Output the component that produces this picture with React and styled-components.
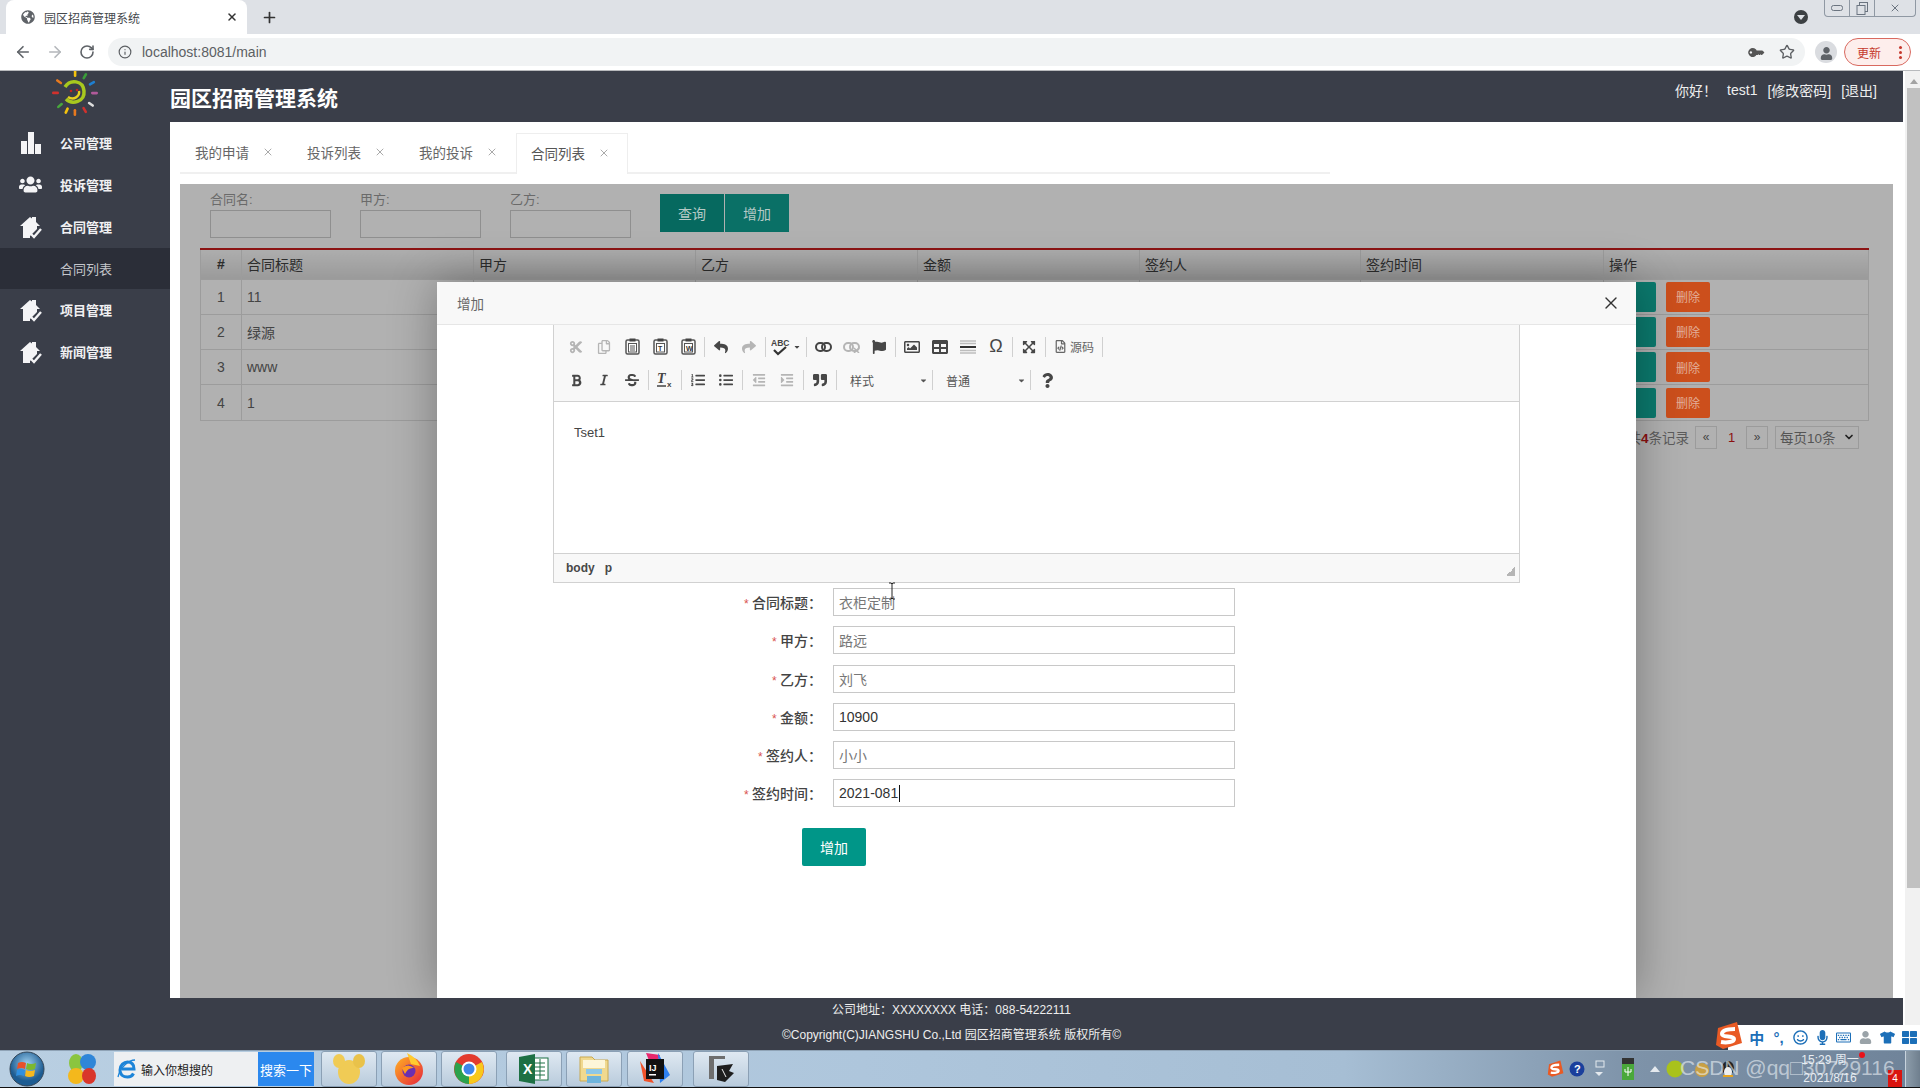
import React from "react";
import styled, { createGlobalStyle } from "styled-components";
import { ArrowLeft, ArrowRight, RotateCw, Info, Star, X, Plus, ChevronDown } from "lucide-react";
import {
  FaCut, FaRegCopy, FaReply, FaShare, FaFlag, FaRegImage, FaTable,
  FaExpandArrowsAlt, FaBold, FaItalic, FaStrikethrough, FaListOl, FaListUl, FaOutdent, FaIndent,
  FaQuoteRight, FaQuestion, FaGlobeAmericas, FaKey, FaUser, FaUsers, FaTshirt, FaMicrophone,
  FaRegSmile, FaRegKeyboard, FaThLarge, FaCaretDown, FaRegFileCode,
} from "react-icons/fa";

const SANS = `"Liberation Sans", "Noto Sans CJK SC", sans-serif`;

const Global = createGlobalStyle`
  html, body { margin: 0; padding: 0; height: 100%; overflow: hidden; background: #fff; }
  body { font-family: ${SANS}; font-size: 13px; color: #333; }
  * { box-sizing: border-box; }
`;

const Win = styled.div`
  width: 1920px; height: 1088px; display: flex; flex-direction: column; overflow: hidden; position: relative;
`;

/* browser chrome */
const TabStrip = styled.div`
  height: 34px; background: #dee1e6; display: flex; align-items: flex-end; padding-left: 6px; position: relative; flex: none;
`;
const BrowserTab = styled.div`
  width: 241px; height: 34px; background: #fff; border-radius: 8px 8px 0 0; display: flex; align-items: center;
  padding: 0 9px 0 15px; gap: 9px; font-size: 12px; color: #45484d;
`;
const TabTitle = styled.span` flex: 1; `;
const NewTab = styled.div` width: 40px; height: 34px; margin-left: 2px; display: flex; align-items: center; justify-content: center; color: #333; `;
const StripRight = styled.div`
  margin-left: auto; align-self: flex-start; display: flex; align-items: flex-start; gap: 16px; padding-right: 4px;
`;
const ProfileDot = styled.div`
  width: 14px; height: 14px; margin-top: 10px; border-radius: 50%; background: #3c4043; display: flex; align-items: center; justify-content: center;
  &::after { content: ""; border: 4px solid transparent; border-top: 5px solid #dee1e6; margin-top: 5px; }
`;
const WinButtons = styled.div`
  width: 92px; height: 17px; border: 1px solid #8f98a3; border-top: 0; border-radius: 0 0 4px 4px; display: grid; grid-template-columns: 25px 25px 1fr;
`;
const WinBtn = styled.div`
  display: flex; align-items: center; justify-content: center; color: #6b7480; border-right: 1px solid #8f98a3;
  &:last-child { border-right: 0; }
`;
const BrowserBar = styled.div`
  height: 37px; background: #fff; display: flex; align-items: center; padding-left: 7px; flex: none; border-bottom: 1px solid #b8babd;
`;
const NavIcon = styled.div` width: 32px; display: flex; justify-content: center; color: ${p => p.$off ? "#b4b7bb" : "#5f6368"}; `;
const Address = styled.div`
  margin-left: 5px; width: 1697px; height: 28px; border-radius: 14px; background: #f1f3f4; display: flex; align-items: center;
  padding: 0 10px 0 10px; gap: 10px; font-size: 14px; color: #5c5f63;
`;
const AddressText = styled.span` flex: 1; `;
const KeyIcon = styled(FaKey)` transform: scaleX(-1) rotate(45deg); margin-right: 7px; color: #555; `;
const AvatarCircle = styled.div`
  margin-left: 10px; width: 22px; height: 22px; border-radius: 50%; background: #dadce0; color: #5f6368; display: flex; align-items: flex-end; justify-content: center; padding-bottom: 3px;
`;
const UpdatePill = styled.div`
  margin-left: 7px; width: 67px; height: 28px; border: 1px solid #d9695f; border-radius: 14px; background: #fdeeec; color: #c5392d; font-size: 12px;
  display: flex; align-items: center; justify-content: space-between; padding: 0 8px 0 12px;
`;
const Dots = styled.span`
  width: 3px; height: 3px; border-radius: 50%; background: #c5392d; box-shadow: 0 -5px 0 #c5392d, 0 5px 0 #c5392d;
`;

/* page */
const Viewport = styled.div` flex: 1; display: flex; min-height: 0; `;
const Page = styled.div` flex: 1; display: flex; flex-direction: column; min-width: 0; `;
const Body = styled.div` flex: 1; display: flex; min-height: 0; `;
const Sidebar = styled.aside` width: 170px; background: #3a3e49; flex: none; display: flex; flex-direction: column; `;
const LogoBox = styled.div` height: 51px; padding-left: 50px; flex: none; `;
const NavItem = styled.div`
  height: 42px; display: flex; align-items: center; padding: 0 0 1px 19px; gap: 18px; color: #f0f0f2; font-size: 13px; font-weight: 700;
`;
const NavIconBox = styled.div` width: 23px; display: flex; justify-content: center; color: #f4f4f6; `;
const SubItem = styled.div`
  height: 41px; background: #2b2e38; display: flex; align-items: center; padding-left: 60px; color: #c4c6cb; font-size: 13px;
`;
const MainCol = styled.div` flex: 1; display: flex; flex-direction: column; min-width: 0; `;
const Header = styled.header`
  height: 51px; background: #3a3e49; flex: none; display: flex; justify-content: space-between; padding-right: 26px; color: #fff;
`;
const Title = styled.h1` margin: 14px 0 0; font-size: 21px; line-height: 27px; font-weight: 700; `;
const UserBar = styled.div` display: flex; align-items: center; height: 38px; gap: 10px; font-size: 14px; color: #eee; `;
const Content = styled.div` flex: 1; background: #fff; display: flex; flex-direction: column; padding: 11px 10px 0; min-height: 0; `;
const Tabs = styled.div` height: 41px; width: 1150px; border-bottom: 2px solid #f0f0f0; display: flex; flex: none; `;
const TabItem = styled.div`
  width: 112px; height: ${p => p.$active ? 41 : 39}px; padding: 0 0 2px 14px; display: flex; align-items: center; gap: 13px; font-size: 13.5px;
  color: ${p => p.$active ? "#555" : "#666"}; background: #fff;
  border: ${p => p.$active ? "1px solid #eee" : "1px solid transparent"}; border-bottom: 0;
`;
const TabClose = styled.span` color: #aaa; display: flex; `;

const Panel = styled.div`
  margin-top: 10px; flex: 1; background: #b1b1b1; position: relative; overflow: hidden; min-height: 0;
`;
const SearchRow = styled.div` display: flex; padding: 8px 0 0 30px; height: 64px; `;
const SearchField = styled.label`
  width: 121px; margin-right: 29px; display: flex; flex-direction: column; font-size: 13px; color: #6a6a6a; line-height: 16px;
`;
const SearchBox = styled.div` height: 28px; margin-top: 2px; border: 1px solid #8f8f8f; background: #b1b1b1; `;
const SearchBtn = styled.div`
  width: 64px; height: 38px; margin-top: 2px; margin-right: 1px; background: ${p => p.$dark ? "#06695f" : "#0a7066"}; color: #b5c9c6;
  display: flex; align-items: center; justify-content: center; font-size: 14px;
`;
const Table = styled.table`
  margin: 0 25px 0 20px; width: 1668px; border-collapse: collapse; table-layout: fixed; border-top: 2px solid #8c1414; font-size: 14px; color: #333;
  th, td { border: 1px solid #9c9c9c; padding: 0 5px; text-align: left; }
  th { height: 30px; font-weight: 400; background: linear-gradient(#adadad, #9a9a9a); color: #2c2c2c; }
  td { height: 35.3px; background: #b1b1b1; color: #444; }
`;
const Col = styled.col` width: ${p => p.$w}px; `;
const NumCell = styled.td` && { text-align: center; } `;
const NumHead = styled.th` && { text-align: center; font-weight: 700; } `;
const OpButtons = styled.div` display: flex; gap: 10px; margin-left: -25px; `;
const OpBtn = styled.div`
  width: ${p => p.$w}px; height: 30px; border-radius: 2px; background: ${p => p.$c}; color: ${p => p.$t};
  display: flex; align-items: center; justify-content: center; font-size: 12px;
`;
const Pager = styled.div`
  display: flex; justify-content: flex-end; align-items: center; height: 23px; margin: 5px 34px 0 0; font-size: 13.5px; color: #5c5c5c; gap: 0;
`;
const Total = styled.span` margin-right: 6px; b { color: #8b1010; } `;
const PageBox = styled.div`
  width: 22px; height: 23px; border: 1px solid #9b9b9b; display: flex; align-items: center; justify-content: center; font-size: 12px; color: #444;
`;
const PageNum = styled.span` width: 29px; text-align: center; color: #8b1010; font-size: 13px; `;
const PageSelect = styled.div`
  margin-left: 7px; width: 84px; height: 23px; border: 1px solid #9b9b9b; display: flex; align-items: center; justify-content: space-between; padding: 0 3px 0 4px; color: #555; font-size: 13.5px;
`;

/* modal over the dimmed panel */
const Modal = styled.div`
  position: absolute; left: 257px; top: 98px; width: 1199px; height: 716px; background: #fff;
  box-shadow: 0 0 45px rgba(0,0,0,.32); display: flex; flex-direction: column;
`;
const ModalHead = styled.div`
  height: 43px; flex: none; background: #f8f8f8; border-bottom: 1px solid #e6e6e6; display: flex; align-items: center; justify-content: space-between;
  padding: 0 15px 0 20px; font-size: 13.5px; color: #666;
`;
const CloseX = styled.div` color: #333; display: flex; `;
const Editor = styled.div`
  margin-left: 116px; width: 967px; height: 258px; flex: none; border: 1px solid #d1d1d1; border-top: 0; display: flex; flex-direction: column;
`;
const EdToolbar = styled.div`
  height: 77px; flex: none; background: #f8f8f8; border-bottom: 1px solid #d1d1d1; padding: 5px 0 0 8px; display: flex; flex-direction: column; gap: 0;
`;
const EdRow = styled.div` height: 33.5px; display: flex; align-items: center; `;
const Tool = styled.div`
  width: ${p => p.$w || 28}px; height: 24px; display: flex; align-items: center; justify-content: center; font-size: ${p => p.$fs || 14}px; color: ${p => p.$off ? "#b5b5b5" : "#474747"}; flex: none;
`;
const Sep = styled.div` width: 1px; height: 20px; background: #d0d0d0; margin: 0 2px; flex: none; `;
const SourceBtn = styled.div`
  width: 52px; height: 24px; display: flex; align-items: center; justify-content: center; gap: 3px; color: #666; font-size: 12px; flex: none;
`;
const Combo = styled.div`
  width: ${p => p.$w}px; height: 24px; padding: 0 2px 0 11px; display: flex; align-items: center; justify-content: space-between; color: #555; font-size: 12px; flex: none;
`;
const EdBody = styled.div` flex: 1; background: #fff; padding: 23px 20px; font-size: 13px; line-height: 16px; color: #444; `;
const EdStatus = styled.div`
  height: 29px; background: #f8f8f8; border-top: 1px solid #d1d1d1; display: flex; align-items: center; justify-content: space-between; padding: 0 4px 0 12px; font-size: 12px; font-weight: 700; color: #484848;
`;
const Crumbs = styled.div` display: flex; gap: 10px; `;
const Grip = styled.div`
  width: 9px; height: 9px; align-self: flex-end; margin-bottom: 6px;
  background: linear-gradient(135deg, transparent 50%, #b5b5b5 50%);
`;
const Form = styled.div` padding-top: 5px; display: flex; flex-direction: column; gap: 10.3px; position: relative; `;
const Row = styled.div` display: flex; align-items: center; height: 28px; `;
const RowLabel = styled.div`
  width: 385px; margin-right: 11px; text-align: right; font-size: 14px; color: #444; font-weight: 500;
  &::before { content: "* "; color: #d9534f; font-size: 12px; }
`;
const Field = styled.div`
  width: 402px; height: 28px; border: 1px solid #c8c8c8; display: flex; align-items: center; padding: 0 5px; font-size: 14px;
  color: ${p => p.$dim ? "#777" : "#333"}; background: #fff;
`;
const Caret = styled.span` width: 1px; height: 17px; background: #111; margin-left: 1px; `;
const Submit = styled.div`
  margin: 10px 0 0 365px; width: 64px; height: 38px; background: #009688; color: #fff; border-radius: 2px;
  display: flex; align-items: center; justify-content: center; font-size: 14px;
`;
const IBeam = styled.svg` position: absolute; left: 451px; top: -1px; `;

const Footer = styled.footer`
  height: 52px; flex: none; background: #3a3e49; color: #eee; font-size: 12px; display: flex; flex-direction: column; align-items: center; padding-top: 3px; gap: 7px; line-height: 18px;
`;
const Scrollbar = styled.div`
  width: 17px; flex: none; background: #f1f1f1; padding: 4px 0 0 2px; display: flex; flex-direction: column; align-items: stretch;
  border-left: 2px solid #fff;
`;
const ScrollUp = styled.div`
  height: 13px; flex: none; display: flex; justify-content: center; align-items: center;
  &::after { content: ""; border: 4px solid transparent; border-bottom: 5px solid #a3a3a3; margin-top: -4px; }
`;
const ScrollThumb = styled.div` height: 800px; background: #c1c1c1; `;

/* windows taskbar */
const Taskbar = styled.div`
  height: 38px; flex: none; display: flex; align-items: center; position: relative; padding-left: 9px;
  background: linear-gradient(90deg, #b9cfe2 0%, #aec6dc 45%, #a6bed4 70%, #7e93a9 85%, #6f8399 100%);
  border-top: 1px solid #8fa3b6; border-bottom: 1px solid #111;
`;
const Orb = styled.svg` flex: none; `;
const Multi = styled.svg` margin-left: 20px; flex: none; `;
const Search360 = styled.div`
  margin-left: 15px; width: 200px; height: 34px; display: flex; background: #eef0f2; flex: none;
`;
const SearchHint = styled.div` flex: 1; display: flex; align-items: center; gap: 4px; padding-left: 3px; font-size: 12px; color: #222; `;
const SearchGo = styled.div` width: 56px; background: #2b88ee; color: #fff; font-size: 13px; display: flex; align-items: center; justify-content: center; white-space: nowrap; `;
const TaskGroup = styled.div` display: flex; gap: 4px; margin-left: ${p => p.$ml}px; flex: none; `;
const TaskBtn = styled.div`
  width: 56px; height: 36px; border: 1px solid #8ba0b5; border-radius: 3px; background: linear-gradient(#dfe9f2, #b9cbdc); display: flex; align-items: center; justify-content: center;
`;
const Tray = styled.div` position: absolute; right: 56px; top: 0; bottom: 0; display: flex; align-items: center; `;
const TrayIcon = styled.span` margin-left: ${p => p.$ml}px; display: flex; `;
const TrayClock = styled.div`
  width: 68px; color: #e8edf2; font-size: 12px; line-height: 18px; text-align: center; margin-left: 60px; white-space: nowrap;
`;
const ShowDesk = styled.div`
  position: absolute; right: 0; top: 0; bottom: 0; width: 15px; background: linear-gradient(90deg,#8c9caa,#6f7f8e); border-left: 1px solid #c8d3dd;
`;
const Badge = styled.div`
  position: absolute; right: 18px; bottom: 0; width: 14px; height: 17px; background: #d9140f; color: #fff; font-size: 10px; display: flex; align-items: center; justify-content: center;
`;
const RedDot = styled.div` position: absolute; left: 1859px; top: 1052px; width: 6px; height: 6px; border-radius: 50%; background: #e8111a; `;
const Watermark = styled.div`
  position: absolute; left: 1680px; top: 1054px; font-size: 21px; line-height: 28px; color: rgba(235,240,245,.62); white-space: nowrap; pointer-events: none;
`;
const ImeBar = styled.div`
  position: absolute; left: 1728px; top: 1025px; right: 0; height: 25px; background: #fff; display: flex; align-items: center; gap: 0; padding-left: 18px; color: #1c6fb8;
`;
const ImeCell = styled.div` width: 22.5px; display: flex; justify-content: center; font-size: 15px; font-weight: 700; color: ${p => p.$c || "#1c6fb8"}; `;
const SogouFloat = styled.div` position: absolute; left: 1713px; top: 1021px; `;

const Sogou = ({ s = 30 }) => (
  <svg width={s} height={s} viewBox="0 0 30 30">
    <path d="M5 7 L24 1 L29 22 L10 28 L3 24 Z" fill="#e95a24" />
    <path d="M22 8 C16 8 9 9 9 13 C9 17 21 14 21 18 C21 21 14 22 8 21" fill="none" stroke="#fff" strokeWidth="4" />
  </svg>
);

const Bars = () => (
  <svg width="20" height="22" viewBox="0 0 20 22">
    <rect x="0" y="9" width="6" height="13" fill="#f4f4f6" /><rect x="7" y="0" width="6" height="22" fill="#f4f4f6" /><rect x="14" y="12" width="6" height="10" fill="#f4f4f6" />
  </svg>
);

const HouseCheck = () => (
  <svg width="23" height="24" viewBox="0 0 23 24">
    <path d="M1 11 L11 2 L13 3.5 L13 2 L17 2 L17 7 L21 11 L18 11 L18 14 L11 21 L11 23 L4 23 L4 11 Z" fill="#f4f4f6" />
    <path d="M11 18 L15 22 L22 14" fill="none" stroke="#f4f4f6" strokeWidth="2.4" />
  </svg>
);

const rays = [
  [0, "#f4c20d"], [30, "#3a9d3a"], [60, "#1f7fd0"], [90, "#b05a9a"], [125, "#ddd"], [150, "#d0312d"],
  [180, "#e8791e"], [205, "#f4c20d"], [230, "#48a83c"], [270, "#d0312d"], [305, "#e8791e"],
];
const Logo = () => (
  <svg width="52" height="46" viewBox="0 0 52 46">
    {rays.map(([a, c]) => (
      <rect key={a} x="23.8" y="-1" width="2.6" height="7" rx="1.3" fill={c} transform={`rotate(${a} 25 22)`} />
    ))}
    <path d="M15 16 C20 8 33 9 34 20 C35 31 22 34 16 28" fill="none" stroke="#a8c81e" strokeWidth="3.5" />
    <path d="M18 26 C24 30 30 25 29 20" fill="none" stroke="#e8d21e" strokeWidth="2.4" />
    <circle cx="21" cy="20" r="1.3" fill="#c6231f" /><circle cx="27" cy="19" r="1.3" fill="#c6231f" />
  </svg>
);

const WinOrb = () => (
  <Orb width="36" height="36" viewBox="0 0 36 36">
    <defs><radialGradient id="o" cx=".5" cy=".35"><stop offset="0" stopColor="#9ed0f0" /><stop offset="1" stopColor="#1d5c92" /></radialGradient></defs>
    <circle cx="18" cy="18" r="17" fill="url(#o)" stroke="#345" />
    <path d="M9 12 Q13 10 17 12 L16 18 Q12 16 8 18Z" fill="#e8512a" />
    <path d="M18 12 Q22 14 27 12 L26 18 Q21 20 17 18Z" fill="#7cb82f" />
    <path d="M8 19 Q12 17 16 19 L15 25 Q11 23 7 25Z" fill="#2f8fe0" />
    <path d="M17 19 Q21 21 26 19 L25 25 Q20 27 16 25Z" fill="#f5b81f" />
  </Orb>
);
const Color360 = () => (
  <Multi width="34" height="34" viewBox="0 0 34 34">
    <ellipse cx="11" cy="11" rx="7" ry="9" fill="#8bc53f" /><ellipse cx="23" cy="10" rx="8" ry="8" fill="#2f86d8" />
    <ellipse cx="11" cy="24" rx="8" ry="8" fill="#f4b81c" /><ellipse cx="24" cy="24" rx="7" ry="8" fill="#d9362b" />
  </Multi>
);
const IEIcon = () => (
  <svg width="20" height="24" viewBox="0 0 20 24">
    <path d="M5 12h12c0-5-3-7-6.500-7S3 8 3 13s3.500 7 7.500 7c3 0 5-1.500 6-3.500" fill="none" stroke="#1c84d8" strokeWidth="3" />
    <path d="M1 20C3 10 12 3 18 3" fill="none" stroke="#1c84d8" strokeWidth="1.300" />
  </svg>
);
const FolderMouse = () => (
  <svg width="34" height="32" viewBox="0 0 34 32"><ellipse cx="17" cy="19" rx="11" ry="12" fill="#f0cb55" /><ellipse cx="7" cy="8" rx="6" ry="7" fill="#f0cb55" /><ellipse cx="27" cy="8" rx="6" ry="7" fill="#e9c24a" /></svg>
);
const Firefox = () => (
  <svg width="32" height="34" viewBox="0 0 32 34">
    <defs><linearGradient id="ff" x1="0" y1="0" x2="1" y2="1"><stop offset="0" stopColor="#ffb224" /><stop offset="1" stopColor="#e5243b" /></linearGradient></defs>
    <circle cx="16" cy="19" r="14" fill="url(#ff)" /><path d="M14 1 Q24 6 27 14 L18 12Z" fill="#ffcb30" /><circle cx="16" cy="19" r="6.5" fill="#6b2fb0" /><path d="M9 16 Q15 11 21 16 Q15 15 12 22Z" fill="#ff9a1f" />
  </svg>
);
const Chrome = () => (
  <svg width="32" height="32" viewBox="0 0 32 32">
    <circle cx="16" cy="16" r="15" fill="#e33b2e" /><path d="M16 16 L29 9 A15 15 0 0 1 16 31Z" fill="#f8c81c" /><path d="M16 16 L16 31 A15 15 0 0 1 3 9Z" fill="#2ba24c" />
    <circle cx="16" cy="16" r="7.5" fill="#fff" /><circle cx="16" cy="16" r="5.5" fill="#3f86e8" />
  </svg>
);
const Excel = () => (
  <svg width="32" height="30" viewBox="0 0 32 30">
    <rect x="14" y="4" width="16" height="22" fill="#fff" stroke="#1d7044" /><path d="M17 9h10M17 13h10M17 17h10M17 21h10M22 5v20" stroke="#1d7044" />
    <path d="M1 3 L17 0 V30 L1 27Z" fill="#1d7044" /><text x="5" y="20" fontSize="14" fontWeight="700" fontFamily="Liberation Sans, sans-serif" fill="#fff">X</text>
  </svg>
);
const Explorer = () => (
  <svg width="32" height="30" viewBox="0 0 32 30">
    <path d="M2 3h12l3 3h13v21H2Z" fill="#f0d98f" stroke="#c9a950" /><rect x="5" y="6" width="22" height="8" fill="#fdf6d8" /><rect x="8" y="15" width="16" height="5" fill="#8cc7e8" /><path d="M9 29v-7h14v7" fill="#6eb4dc" />
  </svg>
);
const Idea = () => (
  <svg width="30" height="32" viewBox="0 0 30 32">
    <path d="M6 0 L20 2 L14 20Z" fill="#e8266d" /><path d="M18 0 L30 22 L20 30Z" fill="#2d7ff0" /><path d="M0 8 L14 30 L4 28Z" fill="#f0522a" />
    <rect x="6" y="6" width="18" height="20" fill="#111" /><text x="9" y="18" fontSize="9" fontWeight="700" fontFamily="Liberation Sans, sans-serif" fill="#fff">IJ</text><rect x="9" y="21" width="7" height="1.5" fill="#fff" />
  </svg>
);
const Typora = () => (
  <svg width="32" height="32" viewBox="0 0 32 32">
    <path d="M4 3h16v3H9v20h-5Z" fill="#6e6e6e" /><path d="M12 13 L28 11 L24 18 L29 20 L20 29 L12 27Z" fill="#1e1e1e" /><path d="M17 16 L21 24" stroke="#eee" />
  </svg>
);

const rows = [["1", "11"], ["2", "绿源"], ["3", "www"], ["4", "1"]];
const cols = [41, 232, 222, 222, 222, 221, 243, 265];
const heads = ["合同标题", "甲方", "乙方", "金额", "签约人", "签约时间", "操作"];
const fields = [
  ["合同标题：", "衣柜定制", true], ["甲方：", "路远", true], ["乙方：", "刘飞", true],
  ["金额：", "10900", false], ["签约人：", "小小", true],
];

const Hr = () => (
  <svg width="18" height="16" viewBox="0 0 18 16"><path d="M1 2h16M1 4.500h16" stroke="#bdbdbd" strokeWidth="1.5" /><path d="M1 8h16" stroke="#333" strokeWidth="2" /><path d="M1 11.500h16M1 14h16" stroke="#bdbdbd" strokeWidth="1.5" /></svg>
);
const Spell = () => (
  <svg width="22" height="18" viewBox="0 0 22 18">
    <text x="0" y="8" fontSize="8.5" fontWeight="700" fontFamily="Liberation Sans, sans-serif" fill="#444">ABC</text>
    <path d="M3 12 L7 16 L15 9" fill="none" stroke="#333" strokeWidth="2.2" />
  </svg>
);
const PasteT = ({ t }) => (
  <svg width="15" height="17" viewBox="0 0 15 17">
    <rect x="1" y="2" width="13" height="14" rx="1.5" fill="none" stroke="#555" strokeWidth="1.5" />
    <rect x="4.5" y="0.5" width="6" height="3" fill="#444" />
    <rect x="3.5" y="5.5" width="8" height="8.5" fill="#fff" stroke="#555" />
    {t ? <text x="5" y="12.5" fontSize="7" fontWeight="700" fontFamily="Liberation Sans, sans-serif" fill="#333">{t}</text> : <path d="M5 8h5M5 10h5M5 12h5" stroke="#555" />}
  </svg>
);
const ChainLink = ({ off }) => (
  <svg width="17" height="12" viewBox="0 0 17 12">
    <rect x="1" y="2" width="9" height="8" rx="4" fill="none" stroke={off ? "#b5b5b5" : "#444"} strokeWidth="2" />
    <rect x="7" y="2" width="9" height="8" rx="4" fill="none" stroke={off ? "#b5b5b5" : "#444"} strokeWidth="2" />
    {off && <path d="M11 7l5 5M16 7l-5 5" stroke="#b5b5b5" strokeWidth="1.5" />}
  </svg>
);
const ClearFormat = () => (
  <svg width="18" height="18" viewBox="0 0 18 18">
    <text x="1" y="12" fontSize="14" fontWeight="700" fontStyle="italic" fontFamily="Liberation Serif, serif" fill="#444">T</text>
    <path d="M1 15h9" stroke="#444" strokeWidth="1.5" />
    <text x="11" y="16" fontSize="8" fontWeight="700" fontFamily="Liberation Sans, sans-serif" fill="#444">x</text>
  </svg>
);

export default function App() {
  return (
    <Win>
      <Global />
      <TabStrip>
        <BrowserTab>
          <FaGlobeAmericas size={14} color="#5f6368" />
          <TabTitle>园区招商管理系统</TabTitle>
          <X size={12} strokeWidth={3} color="#333" />
        </BrowserTab>
        <NewTab><Plus size={17} strokeWidth={2.4} /></NewTab>
        <StripRight>
          <ProfileDot />
          <WinButtons>
            <WinBtn><svg width="12" height="6"><rect x=".5" y=".5" width="11" height="5" rx="2" fill="none" stroke="#6b7480" /></svg></WinBtn>
            <WinBtn><svg width="13" height="13"><rect x="3.5" y=".5" width="8" height="9" fill="none" stroke="#6b7480" /><rect x="1" y="3.5" width="8" height="9" fill="#dee1e6" stroke="#6b7480" /></svg></WinBtn>
            <WinBtn><X size={12} /></WinBtn>
          </WinButtons>
        </StripRight>
      </TabStrip>
      <BrowserBar>
        <NavIcon><ArrowLeft size={18} strokeWidth={2.2} /></NavIcon>
        <NavIcon $off><ArrowRight size={18} strokeWidth={2.2} /></NavIcon>
        <NavIcon><RotateCw size={16} strokeWidth={2.4} /></NavIcon>
        <Address>
          <Info size={14} />
          <AddressText>localhost:8081/main</AddressText>
          <KeyIcon size={13} />
          <Star size={16} />
        </Address>
        <AvatarCircle><FaUser size={13} /></AvatarCircle>
        <UpdatePill>更新<Dots /></UpdatePill>
      </BrowserBar>
      <Viewport>
        <Page>
          <Body>
            <Sidebar>
              <LogoBox><Logo /></LogoBox>
              <NavItem><NavIconBox><Bars /></NavIconBox>公司管理</NavItem>
              <NavItem><NavIconBox><FaUsers size={23} /></NavIconBox>投诉管理</NavItem>
              <NavItem><NavIconBox><HouseCheck /></NavIconBox>合同管理</NavItem>
              <SubItem>合同列表</SubItem>
              <NavItem><NavIconBox><HouseCheck /></NavIconBox>项目管理</NavItem>
              <NavItem><NavIconBox><HouseCheck /></NavIconBox>新闻管理</NavItem>
            </Sidebar>
            <MainCol>
              <Header>
                <Title>园区招商管理系统</Title>
                <UserBar><span>你好！</span><span>test1</span><span>[修改密码]</span><span>[退出]</span></UserBar>
              </Header>
              <Content>
                <Tabs>
                  {["我的申请", "投诉列表", "我的投诉", "合同列表"].map((t, i) => (
                    <TabItem key={t} $active={i === 3}>{t}<TabClose><X size={12} /></TabClose></TabItem>
                  ))}
                </Tabs>
                <Panel>
                  <SearchRow>
                    {["合同名:", "甲方:", "乙方:"].map(l => (
                      <SearchField key={l}>{l}<SearchBox /></SearchField>
                    ))}
                    <SearchBtn $dark>查询</SearchBtn>
                    <SearchBtn>增加</SearchBtn>
                  </SearchRow>
                  <Table>
                    <colgroup>{cols.map((w, i) => <Col key={i} $w={w} />)}</colgroup>
                    <thead>
                      <tr><NumHead>#</NumHead>{heads.map(h => <th key={h}>{h}</th>)}</tr>
                    </thead>
                    <tbody>
                      {rows.map(([n, t]) => (
                        <tr key={n}>
                          <NumCell>{n}</NumCell><td>{t}</td><td /><td /><td /><td /><td />
                          <td><OpButtons><OpBtn $w={72} $c="#0b7a6e" $t="#b7d0cc">详情</OpBtn><OpBtn $w={44} $c="#cc4f1c" $t="#e3b09a">删除</OpBtn></OpButtons></td>
                        </tr>
                      ))}
                    </tbody>
                  </Table>
                  <Pager>
                    <Total>共<b>4</b>条记录</Total>
                    <PageBox>«</PageBox><PageNum>1</PageNum><PageBox>»</PageBox>
                    <PageSelect>每页10条<ChevronDown size={12} strokeWidth={3.5} color="#222" /></PageSelect>
                  </Pager>
                  <Modal>
                    <ModalHead>增加<CloseX><X size={20} strokeWidth={1.6} /></CloseX></ModalHead>
                    <Editor>
                      <EdToolbar>
                        <EdRow>
                          <Tool $off><FaCut /></Tool><Tool $off><FaRegCopy /></Tool>
                          <Tool><PasteT /></Tool><Tool><PasteT t="T" /></Tool><Tool><PasteT t="W" /></Tool>
                          <Sep />
                          <Tool><FaReply /></Tool><Tool $off><FaShare /></Tool>
                          <Sep />
                          <Tool $w={36}><Spell /><FaCaretDown size={8} /></Tool>
                          <Sep />
                          <Tool><ChainLink /></Tool><Tool $off><ChainLink off /></Tool><Tool><FaFlag /></Tool>
                          <Sep />
                          <Tool><FaRegImage size={16} /></Tool><Tool><FaTable size={16} /></Tool><Tool><Hr /></Tool><Tool $fs={18}>Ω</Tool>
                          <Sep />
                          <Tool><FaExpandArrowsAlt /></Tool>
                          <Sep />
                          <SourceBtn><FaRegFileCode size={13} />源码</SourceBtn>
                          <Sep />
                        </EdRow>
                        <EdRow>
                          <Tool><FaBold size={13} /></Tool><Tool><FaItalic size={12} /></Tool><Tool><FaStrikethrough size={14} /></Tool>
                          <Sep />
                          <Tool><ClearFormat /></Tool>
                          <Sep />
                          <Tool><FaListOl /></Tool><Tool><FaListUl /></Tool>
                          <Sep />
                          <Tool $off><FaOutdent /></Tool><Tool $off><FaIndent /></Tool>
                          <Sep />
                          <Tool><FaQuoteRight /></Tool>
                          <Sep />
                          <Combo $w={91}>样式<FaCaretDown size={9} /></Combo>
                          <Sep />
                          <Combo $w={93}>普通<FaCaretDown size={9} /></Combo>
                          <Sep />
                          <Tool><FaQuestion size={15} /></Tool>
                        </EdRow>
                      </EdToolbar>
                      <EdBody>Tset1</EdBody>
                      <EdStatus>
                        <Crumbs><span>body</span><span>p</span></Crumbs>
                        <Grip />
                      </EdStatus>
                    </Editor>
                    <Form>
                      {fields.map(([l, v, dim]) => (
                        <Row key={l}><RowLabel>{l}</RowLabel><Field $dim={dim}>{v}</Field></Row>
                      ))}
                      <Row><RowLabel>签约时间：</RowLabel><Field>2021-081<Caret /></Field></Row>
                      <Submit>增加</Submit>
                      <IBeam width="8" height="18" viewBox="0 0 8 18"><path d="M1 1h2l1 1 1-1h2M4 2v14M1 17h2l1-1 1 1h2" fill="none" stroke="#222" /></IBeam>
                    </Form>
                  </Modal>
                </Panel>
              </Content>
            </MainCol>
          </Body>
          <Footer>
            <span>公司地址：XXXXXXXX 电话：088-54222111</span>
            <span>©Copyright(C)JIANGSHU Co.,Ltd 园区招商管理系统 版权所有©</span>
          </Footer>
        </Page>
        <Scrollbar>
          <ScrollUp />
          <ScrollThumb />
        </Scrollbar>
      </Viewport>
      <Taskbar>
        <WinOrb />
        <Color360 />
        <Search360>
          <SearchHint><IEIcon />输入你想搜的</SearchHint>
          <SearchGo>搜索一下</SearchGo>
        </Search360>
        <TaskGroup $ml={7}>
          <TaskBtn><FolderMouse /></TaskBtn><TaskBtn><Firefox /></TaskBtn><TaskBtn><Chrome /></TaskBtn>
        </TaskGroup>
        <TaskGroup $ml={9}>
          <TaskBtn><Excel /></TaskBtn><TaskBtn><Explorer /></TaskBtn>
        </TaskGroup>
        <TaskGroup $ml={5}><TaskBtn><Idea /></TaskBtn></TaskGroup>
        <TaskGroup $ml={10}><TaskBtn><Typora /></TaskBtn></TaskGroup>
        <Tray>
          <Sogou s={18} />
          <TrayIcon $ml={5}><svg width="16" height="16"><circle cx="8" cy="8" r="7.5" fill="#1a3f9c" /><text x="5" y="12" fontSize="11" fontWeight="700" fontFamily="Liberation Sans, sans-serif" fill="#fff">?</text></svg></TrayIcon>
          <TrayIcon $ml={7}><svg width="14" height="18"><rect x="4" y="1" width="8" height="6" fill="none" stroke="#e4e9ee" /><path d="M3 12h8l-4 4Z" fill="#e4e9ee" /></svg></TrayIcon>
          <TrayIcon $ml={16}><svg width="12" height="22"><rect width="12" height="6" fill="#333" /><rect y="6" width="12" height="16" fill="#4aa83a" /><path d="M6 9v9M3 11v3h6v-3" stroke="#fff" fill="none" /></svg></TrayIcon>
          <TrayIcon $ml={15}><svg width="12" height="8"><path d="M1 7h10L6 1Z" fill="#e4e9ee" /></svg></TrayIcon>
          <TrayIcon $ml={5}><svg width="18" height="18"><circle cx="9" cy="9" r="8.500" fill="#a9c21c" /></svg></TrayIcon>
          <TrayIcon $ml={9}><svg width="18" height="18"><circle cx="9" cy="10" r="7" fill="#c9a043" /></svg></TrayIcon>
          <TrayIcon $ml={9}><svg width="16" height="18"><ellipse cx="8" cy="8" rx="6" ry="7" fill="#222" /><ellipse cx="8" cy="12" rx="4" ry="5" fill="#eee" /><path d="M3 16h10" stroke="#e8a41c" strokeWidth="2" /></svg></TrayIcon>
          <TrayClock>15:29 周一<br />2021/8/16</TrayClock>
        </Tray>
        <Badge>4</Badge>
        <ShowDesk />
      </Taskbar>
      <RedDot />
      <ImeBar>
        <ImeCell>中</ImeCell><ImeCell>°,</ImeCell><ImeCell><FaRegSmile /></ImeCell><ImeCell><FaMicrophone /></ImeCell>
        <ImeCell><FaRegKeyboard /></ImeCell><ImeCell $c="#9aa3a8"><FaUser size={13} /></ImeCell><ImeCell><FaTshirt /></ImeCell><ImeCell><FaThLarge /></ImeCell>
      </ImeBar>
      <SogouFloat><Sogou /></SogouFloat>
      <Watermark>CSDN @qq□30729116</Watermark>
    </Win>
  );
}
